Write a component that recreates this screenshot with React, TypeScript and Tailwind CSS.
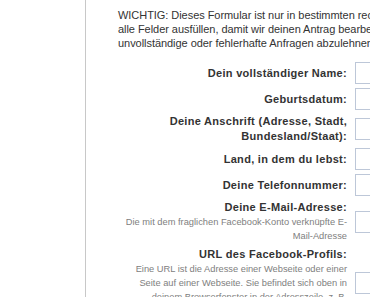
import React from 'react';

type Field = {
  label: React.ReactNode;
  hint?: React.ReactNode;
};

const fields: Field[] = [
  { label: 'Dein vollständiger Name:' },
  { label: 'Geburtsdatum:' },
  {
    label: (
      <>
        Deine Anschrift (Adresse, Stadt,
        <br />
        Bundesland/Staat):
      </>
    ),
  },
  { label: 'Land, in dem du lebst:' },
  { label: 'Deine Telefonnummer:' },
  {
    label: 'Deine E-Mail-Adresse:',
    hint: (
      <>
        Die mit dem fraglichen Facebook-Konto verknüpfte E-
        <br />
        Mail-Adresse
      </>
    ),
  },
  {
    label: 'URL des Facebook-Profils:',
    hint: (
      <>
        Eine URL ist die Adresse einer Webseite oder einer
        <br />
        Seite auf einer Webseite. Sie befindet sich oben in
        <br />
        deinem Browserfenster in der Adresszeile, z. B.
        <br />
        www.facebook.com/profil.php?id=123
      </>
    ),
  },
];

function FormRow({ label, hint }: Field) {
  return (
    <div className="flex items-center py-[2px]">
      <div className="w-[229px] shrink-0 text-right whitespace-nowrap">
        <div className="font-bold text-[11px] leading-[15px] tracking-[0.3px] text-[#333333]">{label}</div>
        {hint && <div className="text-[9.3px] leading-[14px] text-[#808080]">{hint}</div>}
      </div>
      <div className="ml-[8px] w-[260px] h-[22px] shrink-0 border border-[#bdc7d8] bg-white" />
    </div>
  );
}

export default function App() {
  return (
    <div
      className="w-[370px] h-[297px] overflow-hidden bg-white flex"
      style={{ fontFamily: '"Liberation Sans", Arial, sans-serif' }}
    >
      <div className="w-[85px] shrink-0" />
      <div className="w-[700px] shrink-0 border-l border-[#c8c8c8] pl-[32px] pt-[8px]">
        <p className="text-[11px] leading-[14px] tracking-[-0.05px] text-[#333333] whitespace-nowrap">
          WICHTIG: Dieses Formular ist nur in bestimmten rechtlichen Fällen zu verwenden. Bitte achte darauf,
          <br />
          alle Felder ausfüllen, damit wir deinen Antrag bearbeiten können. Wir behalten uns vor,
          <br />
          unvollständige oder fehlerhafte Anfragen abzulehnen.
        </p>
        <div className="mt-[10px] flex flex-col">
          {fields.map((f, i) => (
            <FormRow key={i} label={f.label} hint={f.hint} />
          ))}
        </div>
      </div>
    </div>
  );
}
